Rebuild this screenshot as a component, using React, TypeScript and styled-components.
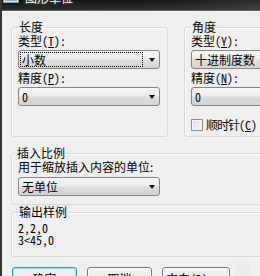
import React from 'react';
import styled, { createGlobalStyle } from 'styled-components';

const Global = createGlobalStyle`
  html, body {
    margin: 0;
    padding: 0;
    width: 260px;
    height: 276px;
    overflow: hidden;
    background: #efefef;
  }
  #root {
    width: 260px;
    height: 276px;
    overflow: hidden;
    position: relative;
  }
`;

const Window = styled.div`
  width: 380px;
  margin-top: -18px;
  display: flex;
  flex-direction: column;
  border-left: 2px solid #353535;
  font-family: "Noto Sans CJK SC", sans-serif;
  font-size: 12px;
  color: #000;
`;

const TitleBar = styled.div`
  height: 28px;
  flex: none;
  display: flex;
  align-items: center;
  gap: 6px;
  padding: 0 0 0 1px;
  box-sizing: border-box;
  background:
    linear-gradient(180deg, rgba(0, 0, 0, 0) 55%, rgba(120, 120, 120, 0.35) 100%),
    linear-gradient(90deg, #050505 0%, #0e0e0e 45%, #2e2e2e 75%, #6a6a6a 100%);
  color: #fff;
`;

const Title = styled.span`
  font-size: 12px;
  line-height: 14px;
  margin-top: 3px;
  text-shadow: 0 0 4px rgba(255, 255, 255, 0.4);
`;

const Client = styled.div`
  background: #efefef;
  border-top: 1px solid #5c5c5c;
  box-shadow: inset 0 1px 0 #fbfbfb;
  padding: 9px 0 0 9px;
  display: flex;
  flex-direction: column;
  align-items: flex-start;
`;

const TopRow = styled.div`
  display: flex;
  gap: 16px;
  align-items: stretch;
`;

const Group = styled.fieldset<{ $w: number; $mt?: number }>`
  margin: ${(p) => p.$mt ?? 0}px 0 0 0;
  min-width: 0;
  width: ${(p) => p.$w}px;
  box-sizing: border-box;
  border: 1px solid #d3d9dd;
  border-radius: 3px;
  padding: 0 6px 0 6px;
  box-shadow: inset 1px 1px 0 #fbfbfb;
`;

const Legend = styled.legend<{ $ml?: number }>`
  padding: 0 1px;
  margin-left: ${(p) => p.$ml ?? 0}px;
  line-height: 14px;
  height: 14px;
  font-size: 12px;
`;

const GroupBody = styled.div<{ $pb: number }>`
  display: flex;
  flex-direction: column;
  align-items: flex-start;
  padding-bottom: ${(p) => p.$pb}px;
`;

const Caption = styled.div<{ $mt?: number }>`
  line-height: 12px;
  height: 12px;
  margin-top: ${(p) => p.$mt ?? 1}px;
  white-space: nowrap;
`;

const Latin = styled.span`
  font-family: "Noto Sans CJK SC", sans-serif;
  font-size: 12px;
  font-feature-settings: "hwid" 1;
  letter-spacing: 0;
`;

const ComboBox = styled.div<{ $mt?: number }>`
  margin-top: ${(p) => p.$mt ?? 3}px;
  width: 142px;
  height: 19px;
  box-sizing: border-box;
  border: 1px solid #858585;
  border-radius: 3px;
  background: linear-gradient(180deg, #f6f6f6 0%, #ececec 48%, #dedede 52%, #d4d4d4 100%);
  display: flex;
  align-items: center;
  padding-left: 1px;
`;

const ComboText = styled.span<{ $focused?: boolean }>`
  flex: 1;
  height: 15px;
  box-sizing: border-box;
  border: 1px dotted ${(p) => (p.$focused ? '#000' : 'transparent')};
  padding-left: 1px;
  line-height: 13px;
  white-space: nowrap;
  overflow: hidden;
`;

const Arrow = styled.span`
  width: 0;
  height: 0;
  border-left: 3px solid transparent;
  border-right: 3px solid transparent;
  border-top: 4px solid #111;
  margin: 1px 4px 0 6px;
`;

const CheckRow = styled.div`
  margin-top: 12px;
  display: flex;
  align-items: center;
  gap: 3px;
  line-height: 13px;
  height: 13px;
  white-space: nowrap;
`;

const CheckSquare = styled.span`
  width: 12px;
  height: 12px;
  flex: none;
  box-sizing: border-box;
  border: 1px solid #8d8d8d;
  background: linear-gradient(135deg, #d8d8d8 0%, #ececec 60%, #f7f7f7 100%);
  box-shadow: inset 0 0 0 1px #f4f4f4;
`;

const CheckLabel = styled.span`
  letter-spacing: -1px;
`;

const SampleLine = styled.div<{ $mt?: number }>`
  margin-top: ${(p) => p.$mt ?? 0}px;
  line-height: 12px;
  height: 12px;
  font-feature-settings: "hwid" 1;
  white-space: pre;
`;

const ButtonRow = styled.div`
  margin: 10px 0 0 1px;
  display: flex;
  gap: 10px;
`;

const Button = styled.div<{ $default?: boolean; $w?: number }>`
  width: ${(p) => p.$w ?? 65}px;
  height: 22px;
  box-sizing: border-box;
  border: 1px solid ${(p) => (p.$default ? '#3c8fc0' : '#7a7a7a')};
  border-radius: 3px;
  background: linear-gradient(180deg, #f4f4f4 0%, #ebebeb 48%, #dddddd 52%, #cfcfcf 100%);
  box-shadow: ${(p) => (p.$default ? 'inset 0 0 0 1px #9fe0f7, inset 0 0 0 2px #d6f2fc' : 'inset 0 0 0 1px #fafafa')};
  display: flex;
  align-items: center;
  justify-content: center;
  line-height: 14px;
  padding-top: 2px;
  white-space: nowrap;
`;

const Watermark = styled.span`
  position: absolute;
  left: 236px;
  top: 262px;
  font-size: 15px;
  line-height: 16px;
  color: rgba(255, 255, 255, 0.85);
  text-shadow: 0 0 1px rgba(150, 150, 150, 0.6);
  letter-spacing: 1px;
`;

function AppIcon() {
  return (
    <svg width="16" height="16" viewBox="0 0 16 16" style={{ flex: 'none' }}>
      <rect x="0.5" y="1.5" width="15" height="13" fill="#dfe6e2" stroke="#8a9a94" />
      <rect x="2" y="4" width="12" height="9" fill="#3f8c7c" />
      <rect x="2" y="9" width="12" height="4" fill="#6fb1d6" />
    </svg>
  );
}

function Combo({ value, focused, mt }: { value: React.ReactNode; focused?: boolean; mt?: number }) {
  return (
    <ComboBox $mt={mt}>
      <ComboText $focused={focused}>{value}</ComboText>
      <Arrow />
    </ComboBox>
  );
}

function Hot({ label, k, tail = '' }: { label: string; k: string; tail?: string }) {
  return (
    <>
      {label}
      <Latin>
        (<u>{k}</u>){tail}
      </Latin>
    </>
  );
}

export default function App() {
  return (
    <>
      <Global />
      <Window>
        <TitleBar>
          <AppIcon />
          <Title>图形单位</Title>
        </TitleBar>
        <Client>
          <TopRow>
            <Group $w={157}>
              <Legend>长度</Legend>
              <GroupBody $pb={28}>
                <Caption>
                  <Hot label="类型" k="T" tail=":" />
                </Caption>
                <Combo value="小数" focused />
                <Caption $mt={3}>
                  <Hot label="精度" k="P" tail=":" />
                </Caption>
                <Combo value={<Latin>0</Latin>} />
              </GroupBody>
            </Group>
            <Group $w={157}>
              <Legend>角度</Legend>
              <GroupBody $pb={5}>
                <Caption>
                  <Hot label="类型" k="Y" tail=":" />
                </Caption>
                <Combo value="十进制度数" />
                <Caption $mt={3}>
                  <Hot label="精度" k="N" tail=":" />
                </Caption>
                <Combo value={<Latin>0</Latin>} />
                <CheckRow>
                  <CheckSquare />
                  <CheckLabel>
                    <Hot label="顺时针" k="C" />
                  </CheckLabel>
                </CheckRow>
              </GroupBody>
            </Group>
          </TopRow>
          <Group $w={330} $mt={9}>
            <Legend $ml={-2}>插入比例</Legend>
            <GroupBody $pb={8}>
              <Caption>用于缩放插入内容的单位:</Caption>
              <Combo value="无单位" mt={4} />
            </GroupBody>
          </Group>
          <Group $w={330} $mt={0}>
            <Legend>输出样例</Legend>
            <GroupBody $pb={10}>
              <SampleLine $mt={3}>2,2,0</SampleLine>
              <SampleLine>3&lt;45,0</SampleLine>
            </GroupBody>
          </Group>
          <ButtonRow>
            <Button $default>确定</Button>
            <Button>取消</Button>
            <Button $w={68}>
              <Hot label="方向" k="D" tail="..." />
            </Button>
          </ButtonRow>
        </Client>
      </Window>
      <Watermark>图</Watermark>
    </>
  );
}
